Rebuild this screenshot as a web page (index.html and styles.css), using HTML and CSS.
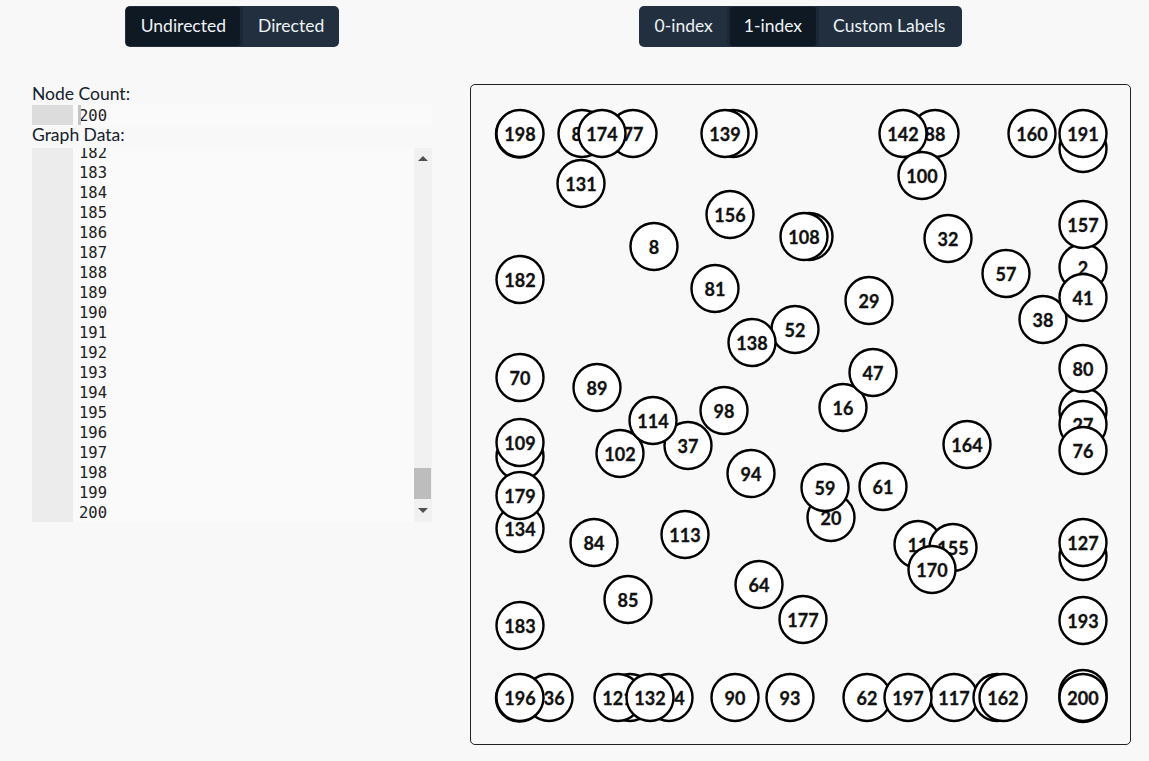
FILE: index.html
```html
<!DOCTYPE html>
<html>
<head>
    <meta charset="UTF-8">
    <title>Graph Editor</title>
    <link rel="stylesheet" href="styles.css">
</head>
<body>
    <div class="page">
        <div class="column">
            <div class="toolbar">
                <div class="btn-group">
                    <button class="btn active">Undirected</button>
                    <button class="btn">Directed</button>
                </div>
            </div>
            <div class="inputs">
                <label class="field-label">Node Count:</label>
                <div class="editor editor-single">
                    <div class="gutter gutter-active"></div>
                    <div class="lines"><div class="cursor"></div><div class="line">200</div></div>
                </div>
                <label class="field-label field-label-data">Graph Data:</label>
                <div class="editor editor-data">
                    <div class="gutter"></div>
                    <div class="lines lines-bottom">
                        <div class="line">182</div>
                        <div class="line">183</div>
                        <div class="line">184</div>
                        <div class="line">185</div>
                        <div class="line">186</div>
                        <div class="line">187</div>
                        <div class="line">188</div>
                        <div class="line">189</div>
                        <div class="line">190</div>
                        <div class="line">191</div>
                        <div class="line">192</div>
                        <div class="line">193</div>
                        <div class="line">194</div>
                        <div class="line">195</div>
                        <div class="line">196</div>
                        <div class="line">197</div>
                        <div class="line">198</div>
                        <div class="line">199</div>
                        <div class="line">200</div>
                    </div>
                    <div class="scrollbar">
                        <div class="arrow arrow-up"></div>
                        <div class="track"><div class="thumb"></div></div>
                        <div class="arrow arrow-down"></div>
                    </div>
                </div>
            </div>
        </div>

        <div class="column">
            <div class="toolbar">
                <div class="btn-group">
                    <button class="btn">0-index</button>
                    <button class="btn active">1-index</button>
                    <button class="btn">Custom Labels</button>
                </div>
            </div>
            <div class="graph-panel">
                <!-- viewBox uses page coordinates so the node list reads like the layout -->
                <svg class="graph" viewBox="471 84.5 659 659">
                    <g class="node"><circle cx="519.5" cy="133.5" r="23.5"/></g>
                    <g class="node"><circle cx="520" cy="133" r="23.5"/><text x="520" y="133">198</text></g>
                    <g class="node"><circle cx="582" cy="133" r="23.5"/><text x="582" y="133">84</text></g>
                    <g class="node"><circle cx="633" cy="133" r="23.5"/><text x="633" y="133">77</text></g>
                    <g class="node"><circle cx="602" cy="133" r="23.5"/><text x="602" y="133">174</text></g>
                    <g class="node"><circle cx="733" cy="133" r="23.5"/></g>
                    <g class="node"><circle cx="725" cy="133" r="23.5"/><text x="725" y="133">139</text></g>
                    <g class="node"><circle cx="935" cy="133" r="23.5"/><text x="935" y="133">88</text></g>
                    <g class="node"><circle cx="903" cy="133" r="23.5"/><text x="903" y="133">142</text></g>
                    <g class="node"><circle cx="1032" cy="133" r="23.5"/><text x="1032" y="133">160</text></g>
                    <g class="node"><circle cx="1083" cy="148" r="23.5"/></g>
                    <g class="node"><circle cx="1083" cy="133" r="23.5"/><text x="1083" y="133">191</text></g>
                    <g class="node"><circle cx="581" cy="183" r="23.5"/><text x="581" y="183">131</text></g>
                    <g class="node"><circle cx="922" cy="175" r="23.5"/><text x="922" y="175">100</text></g>
                    <g class="node"><circle cx="730" cy="214" r="23.5"/><text x="730" y="214">156</text></g>
                    <g class="node"><circle cx="809" cy="236" r="23.5"/></g>
                    <g class="node"><circle cx="804" cy="236" r="23.5"/><text x="804" y="236">108</text></g>
                    <g class="node"><circle cx="948" cy="238" r="23.5"/><text x="948" y="238">32</text></g>
                    <g class="node"><circle cx="654" cy="246" r="23.5"/><text x="654" y="246">8</text></g>
                    <g class="node"><circle cx="1083" cy="267" r="23.5"/><text x="1083" y="267">2</text></g>
                    <g class="node"><circle cx="1083" cy="224" r="23.5"/><text x="1083" y="224">157</text></g>
                    <g class="node"><circle cx="1006" cy="273" r="23.5"/><text x="1006" y="273">57</text></g>
                    <g class="node"><circle cx="520" cy="279" r="23.5"/><text x="520" y="279">182</text></g>
                    <g class="node"><circle cx="715" cy="288" r="23.5"/><text x="715" y="288">81</text></g>
                    <g class="node"><circle cx="1043" cy="319" r="23.5"/><text x="1043" y="319">38</text></g>
                    <g class="node"><circle cx="1083" cy="297" r="23.5"/><text x="1083" y="297">41</text></g>
                    <g class="node"><circle cx="869" cy="300" r="23.5"/><text x="869" y="300">29</text></g>
                    <g class="node"><circle cx="795" cy="329" r="23.5"/><text x="795" y="329">52</text></g>
                    <g class="node"><circle cx="752" cy="342" r="23.5"/><text x="752" y="342">138</text></g>
                    <g class="node"><circle cx="843" cy="407" r="23.5"/><text x="843" y="407">16</text></g>
                    <g class="node"><circle cx="873" cy="372" r="23.5"/><text x="873" y="372">47</text></g>
                    <g class="node"><circle cx="1083" cy="411" r="23.5"/></g>
                    <g class="node"><circle cx="1083" cy="368" r="23.5"/><text x="1083" y="368">80</text></g>
                    <g class="node"><circle cx="520" cy="377" r="23.5"/><text x="520" y="377">70</text></g>
                    <g class="node"><circle cx="597" cy="387" r="23.5"/><text x="597" y="387">89</text></g>
                    <g class="node"><circle cx="724" cy="410" r="23.5"/><text x="724" y="410">98</text></g>
                    <g class="node"><circle cx="1083" cy="424" r="23.5"/><text x="1083" y="424">27</text></g>
                    <g class="node"><circle cx="1083" cy="450" r="23.5"/><text x="1083" y="450">76</text></g>
                    <g class="node"><circle cx="688" cy="445" r="23.5"/><text x="688" y="445">37</text></g>
                    <g class="node"><circle cx="620" cy="453" r="23.5"/><text x="620" y="453">102</text></g>
                    <g class="node"><circle cx="653" cy="420" r="23.5"/><text x="653" y="420">114</text></g>
                    <g class="node"><circle cx="520" cy="456" r="23.5"/></g>
                    <g class="node"><circle cx="520" cy="442" r="23.5"/><text x="520" y="442">109</text></g>
                    <g class="node"><circle cx="967" cy="444" r="23.5"/><text x="967" y="444">164</text></g>
                    <g class="node"><circle cx="751" cy="473" r="23.5"/><text x="751" y="473">94</text></g>
                    <g class="node"><circle cx="831" cy="517" r="23.5"/><text x="831" y="517">20</text></g>
                    <g class="node"><circle cx="825" cy="487" r="23.5"/><text x="825" y="487">59</text></g>
                    <g class="node"><circle cx="883" cy="486" r="23.5"/><text x="883" y="486">61</text></g>
                    <g class="node"><circle cx="520" cy="528" r="23.5"/><text x="520" y="528">134</text></g>
                    <g class="node"><circle cx="520" cy="495" r="23.5"/><text x="520" y="495">179</text></g>
                    <g class="node"><circle cx="685" cy="534" r="23.5"/><text x="685" y="534">113</text></g>
                    <g class="node"><circle cx="594" cy="542" r="23.5"/><text x="594" y="542">84</text></g>
                    <g class="node"><circle cx="918" cy="544" r="23.5"/><text x="918" y="544">11</text></g>
                    <g class="node"><circle cx="953" cy="547" r="23.5"/><text x="953" y="547">155</text></g>
                    <g class="node"><circle cx="932" cy="569" r="23.5"/><text x="932" y="569">170</text></g>
                    <g class="node"><circle cx="1083" cy="556" r="23.5"/></g>
                    <g class="node"><circle cx="1083" cy="542" r="23.5"/><text x="1083" y="542">127</text></g>
                    <g class="node"><circle cx="759" cy="584" r="23.5"/><text x="759" y="584">64</text></g>
                    <g class="node"><circle cx="628" cy="599" r="23.5"/><text x="628" y="599">85</text></g>
                    <g class="node"><circle cx="803" cy="619" r="23.5"/><text x="803" y="619">177</text></g>
                    <g class="node"><circle cx="1083" cy="620" r="23.5"/><text x="1083" y="620">193</text></g>
                    <g class="node"><circle cx="520" cy="625" r="23.5"/><text x="520" y="625">183</text></g>
                    <g class="node"><circle cx="549" cy="697" r="23.5"/><text x="549" y="697">136</text></g>
                    <g class="node"><circle cx="519.5" cy="697.5" r="23.5"/></g>
                    <g class="node"><circle cx="520" cy="697" r="23.5"/><text x="520" y="697">196</text></g>
                    <g class="node"><circle cx="630" cy="697" r="23.5"/></g>
                    <g class="node"><circle cx="618" cy="697" r="23.5"/><text x="618" y="697">121</text></g>
                    <g class="node"><circle cx="669" cy="697" r="23.5"/><text x="669" y="697">144</text></g>
                    <g class="node"><circle cx="650" cy="697" r="23.5"/><text x="650" y="697">132</text></g>
                    <g class="node"><circle cx="735" cy="697" r="23.5"/><text x="735" y="697">90</text></g>
                    <g class="node"><circle cx="790" cy="697" r="23.5"/><text x="790" y="697">93</text></g>
                    <g class="node"><circle cx="867" cy="697" r="23.5"/><text x="867" y="697">62</text></g>
                    <g class="node"><circle cx="954" cy="697" r="23.5"/><text x="954" y="697">117</text></g>
                    <g class="node"><circle cx="908" cy="697" r="23.5"/><text x="908" y="697">197</text></g>
                    <g class="node"><circle cx="997" cy="697" r="23.5"/></g>
                    <g class="node"><circle cx="1003" cy="697" r="23.5"/><text x="1003" y="697">162</text></g>
                    <g class="node"><circle cx="1083" cy="693" r="23.5"/></g>
                    <g class="node"><circle cx="1083" cy="698" r="23.5"/></g>
                    <g class="node"><circle cx="1083" cy="697" r="23.5"/><text x="1083" y="697">200</text></g>
                </svg>
            </div>
        </div>
    </div>
</body>
</html>
```
FILE: styles.css
```css
html, body {
    margin: 0;
    background: #f8f8f8;
}
.page {
    display: grid;
    grid-template-columns: 400px 661px;
    column-gap: 38px;
    padding: 6px 0 0 32px;
    font-family: Lato, sans-serif;
    color: #14202c;
}
.toolbar {
    display: flex;
    justify-content: center;
    height: 78px;
}
.btn-group {
    display: flex;
    height: 41px;
    padding: 1px;
    box-sizing: border-box;
    background: #212f3f;
    border-radius: 5px;
}
.btn {
    padding: 0 14px 2px;
    border: none;
    background: transparent;
    color: #eef3f5;
    font-family: Lato, sans-serif;
    font-size: 17.5px;
}
.btn:first-child {
    padding-left: 15px;
}
.btn:last-child {
    padding-right: 16px;
}
.btn.active {
    margin: 0 3px;
    border-radius: 3px;
    background: #0e1924;
    box-shadow: -3px 0 0 #1a2735, 3px 0 0 #1a2735;
}
.btn.active:first-child {
    margin-left: 0;
    box-shadow: 3px 0 0 #1a2735;
}
.btn.active:first-child + .btn {
    padding: 0 14px 2px 15px;
}
.inputs {
    display: flex;
    flex-direction: column;
}
.field-label {
    font-size: 17.5px;
    line-height: 20px;
    padding-bottom: 1px;
}
.field-label-data {
    padding-bottom: 3px;
}
.editor {
    display: flex;
    background: #fafafa;
    font-family: "DejaVu Sans Mono", monospace;
    font-size: 15.5px;
    line-height: 22px;
    color: #222;
}
.editor-single {
    height: 20px;
}
.editor-data {
    height: 374px;
}
.gutter {
    flex: 0 0 41px;
    background: #ececec;
}
.gutter-active {
    background: #dcdcdc;
}
.lines {
    flex: 1;
    display: flex;
    flex-direction: column;
    overflow: hidden;
    padding-left: 6px;
    position: relative;
}
.lines-bottom {
    justify-content: flex-end;
}
.line {
    flex: 0 0 20px;
    min-height: 0;
}
.cursor {
    position: absolute;
    left: 5px;
    top: 0;
    width: 3px;
    height: 20px;
    background: #c4c4c4;
}
.scrollbar {
    flex: 0 0 18px;
    display: flex;
    flex-direction: column;
    background: #f1f1f1;
}
.arrow {
    display: flex;
    align-items: center;
    justify-content: center;
}
.arrow-up {
    flex: 0 0 20px;
}
.arrow-down {
    flex: 0 0 22px;
    padding-bottom: 2px;
    box-sizing: border-box;
}
.arrow::before {
    content: "";
    border-left: 5px solid transparent;
    border-right: 5px solid transparent;
}
.arrow-up::before {
    border-bottom: 5px solid #505050;
}
.arrow-down::before {
    border-top: 5px solid #505050;
}
.track {
    flex: 1;
    display: flex;
    flex-direction: column;
    justify-content: flex-end;
}
.thumb {
    height: 31px;
    margin: 0 1px 1px 0;
    background: #bdbdbd;
}
.graph-panel {
    height: 661px;
    box-sizing: border-box;
    border: 1px solid #222;
    border-radius: 5px;
}
.graph {
    display: block;
    width: 659px;
    height: 659px;
}
.node circle {
    fill: #fff;
    stroke: #000;
    stroke-width: 2.4;
}
.node text {
    font-family: Lato, sans-serif;
    font-size: 18px;
    font-weight: 700;
    fill: #111;
    stroke: #111;
    stroke-width: 0.3;
    text-anchor: middle;
    dominant-baseline: central;
}
```
